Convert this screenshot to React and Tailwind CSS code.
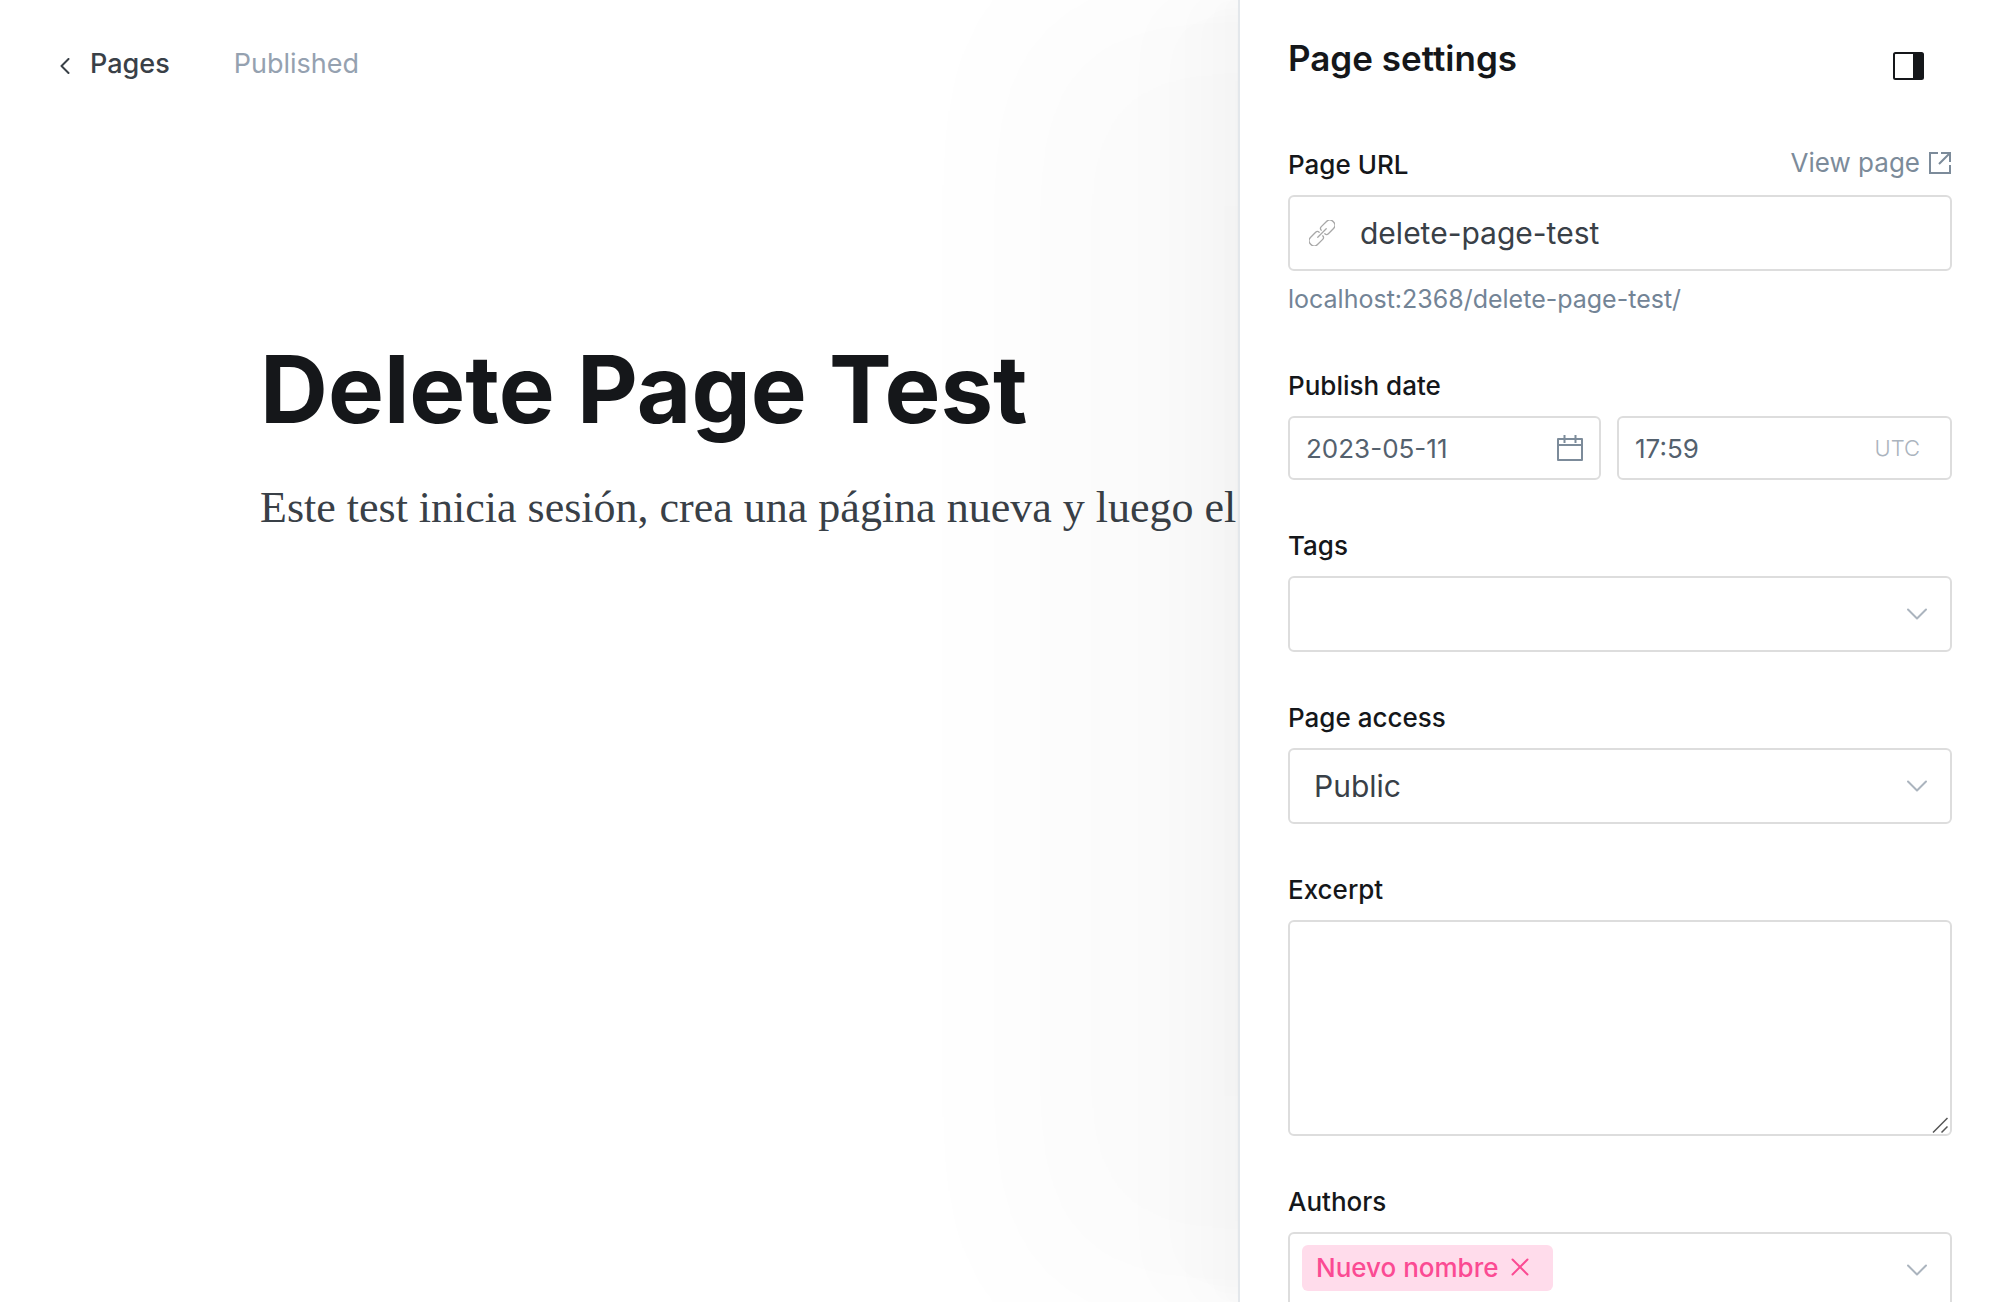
import React from "react";

const label = "text-[26px] leading-8 font-medium text-[#15171a]";
const box = "w-full rounded-md border-2 border-[#dddddd] bg-white outline-none";

function Chevron() {
  return (
    <svg className="pointer-events-none absolute top-1/2 right-[25px] h-3 w-5 -translate-y-1/2" viewBox="0 0 20 12" fill="none" stroke="#abb4be" strokeWidth="2" strokeLinecap="round" strokeLinejoin="round">
      <path d="M1 1.5l9 9 9-9" />
    </svg>
  );
}

function Field({ id, title, action, children }) {
  return (
    <div className="flex flex-col gap-[14px]">
      <div className="flex items-end justify-between">
        <label htmlFor={id} className={label}>{title}</label>
        {action}
      </div>
      {children}
    </div>
  );
}

function Editor() {
  return (
    <main className="min-w-0 flex-1 overflow-hidden">
      <header className="flex items-center gap-16 pt-12 pl-[60px] text-[27px] leading-8">
        <a href="#pages" className="flex items-center gap-5 font-medium text-[#394047]">
          <svg className="mt-1 h-4 w-[10px]" viewBox="0 0 10 16" fill="none" stroke="#394047" strokeWidth="2" strokeLinecap="round" strokeLinejoin="round">
            <path d="M8.5 1L1.5 8l7 7" />
          </svg>
          Pages
        </a>
        <span className="text-[#95a1b0]">Published</span>
      </header>
      <article className="pt-[251px] pl-[260px] whitespace-nowrap">
        <h1 className="text-[94px] leading-[116px] font-bold text-[#15171a]">Delete Page Test</h1>
        <p className="mt-[29px] font-['Liberation_Serif',serif] text-[44px] leading-[64px] text-[#394047]">
          Este test inicia sesión, crea una página nueva y luego el
        </p>
      </article>
    </main>
  );
}

function Settings() {
  return (
    <aside className="w-[762px] shrink-0 border-l-2 border-[#e3e7eb] bg-white px-12 shadow-[-6px_0_4px_rgba(0,0,0,0.004),-13px_0_11px_rgba(0,0,0,0.006),-25px_0_20px_rgba(0,0,0,0.008),-45px_0_36px_rgba(0,0,0,0.01),-84px_0_67px_rgba(0,0,0,0.012),-220px_0_170px_rgba(0,0,0,0.02)]">
      <div className="flex items-start justify-between pt-[35px]">
        <h2 className="text-[35px] leading-[46px] font-semibold text-[#15171a]">Page settings</h2>
        <button type="button" aria-label="Toggle settings" className="mt-[17px] mr-7">
          <svg className="h-7 w-[31px]" viewBox="0 0 31 28">
            <rect x="1" y="1" width="29" height="26" rx="1.5" fill="none" stroke="#15171a" strokeWidth="2" />
            <path d="M20 1h10v26H20z" fill="#15171a" />
          </svg>
        </button>
      </div>

      <form className="mt-[66px] flex flex-col gap-[50px]">
        <Field
          id="url"
          title="Page URL"
          action={
            <a href="#view" className="mb-[2px] flex items-center gap-[9px] text-[26px] leading-8 text-[#7c8b9a]">
              View page
              <svg className="mr-px h-[22px] w-[22px]" viewBox="0 0 22 22" fill="none" stroke="#7c8b9a" strokeWidth="2">
                <path d="M9 1H1v20h20v-8M12 1h9v9M21 1L10 12" />
              </svg>
            </a>
          }
        >
          <div>
            <div className="relative">
              <svg className="absolute top-1/2 left-[21px] h-[26px] w-[26px] -translate-y-1/2" viewBox="0 0 26 26" fill="none" stroke="#a8a8a8" strokeWidth="1.3" strokeLinecap="round" strokeLinejoin="round">
                <g transform="translate(13 13) rotate(-45)">
                  <path d="M-6 0H6" />
                  <path d="M1.5-2.500Q1.500-5 4-5h7q5 0 5 5t-5 5H4Q1.500 5 1.500 2.500" />
                  <path d="M-1.500-2.500Q-1.500-5-4-5h-7q-5 0-5 5t5 5h7q2.500 0 2.500-2.500" />
                </g>
              </svg>
              <input id="url" defaultValue="delete-page-test" className={`${box} h-[76px] pl-[70px] text-[30px] text-[#394047]`} />
            </div>
            <p className="mt-[10px] mb-[3px] text-[25px] leading-9 text-[#738496]">localhost:2368/delete-page-test/</p>
          </div>
        </Field>

        <Field id="date" title="Publish date">
          <div className="flex gap-4">
            <div className="relative w-[313px]">
              <input id="date" defaultValue="2023-05-11" className={`${box} h-16 px-4 text-[26px] text-[#54616e]`} />
              <svg className="absolute top-[19px] right-[18px] h-[26px] w-[26px]" viewBox="0 0 26 26" fill="none" stroke="#7c8b9a" strokeWidth="2" strokeLinejoin="round">
                <path d="M1 4h24v21H1zM1 10h24M7.500 0v8M18.500 0v8" />
              </svg>
            </div>
            <div className="relative flex-1">
              <input aria-label="Publish time" defaultValue="17:59" className={`${box} h-16 px-4 text-[26px] text-[#54616e]`} />
              <span className="absolute top-4 right-8 text-[22px] leading-8 font-light text-[#abb4be]">UTC</span>
            </div>
          </div>
        </Field>

        <Field id="tags" title="Tags">
          <div className="relative">
            <input id="tags" className={`${box} h-[76px] px-6 text-[30px]`} />
            <Chevron />
          </div>
        </Field>

        <Field id="access" title="Page access">
          <div className="relative">
            <select id="access" className={`${box} h-[76px] appearance-none px-6 text-[30px] text-[#394047]`}>
              <option>Public</option>
            </select>
            <Chevron />
          </div>
        </Field>

        <Field id="excerpt" title="Excerpt">
          <div className="relative">
            <textarea id="excerpt" className={`${box} block h-[216px] resize-none px-6 py-4 text-[30px]`} />
            <svg className="pointer-events-none absolute right-1 bottom-[3px] h-4 w-4" viewBox="0 0 16 16" stroke="#555555" strokeWidth="1.5">
              <path d="M1 15.500L15.500 1M9.500 15.500l6-6" />
            </svg>
          </div>
        </Field>

        <Field id="authors" title="Authors">
          <div className="relative">
            <div className={`${box} flex h-[76px] items-start px-3 pt-[11px]`}>
              <span className="flex h-[46px] items-center gap-3 rounded-md bg-[#ffdceb] pr-6 pb-[2px] pl-[14px] text-[26px] font-medium text-[#fb4b93]">
                Nuevo nombre
                <button type="button" aria-label="Remove Nuevo nombre">
                  <svg className="h-[18px] w-[18px]" viewBox="0 0 18 18" stroke="#fb4b93" strokeWidth="2" strokeLinecap="round">
                    <path d="M1.500 1.500l15 15M16.500 1.500l-15 15" />
                  </svg>
                </button>
              </span>
              <input id="authors" className="h-[46px] min-w-0 flex-1 outline-none" />
            </div>
            <Chevron />
          </div>
        </Field>
      </form>
    </aside>
  );
}

export default function App() {
  return (
    <div className="flex h-screen overflow-hidden bg-white font-['Inter',sans-serif]">
      <Editor />
      <Settings />
    </div>
  );
}
